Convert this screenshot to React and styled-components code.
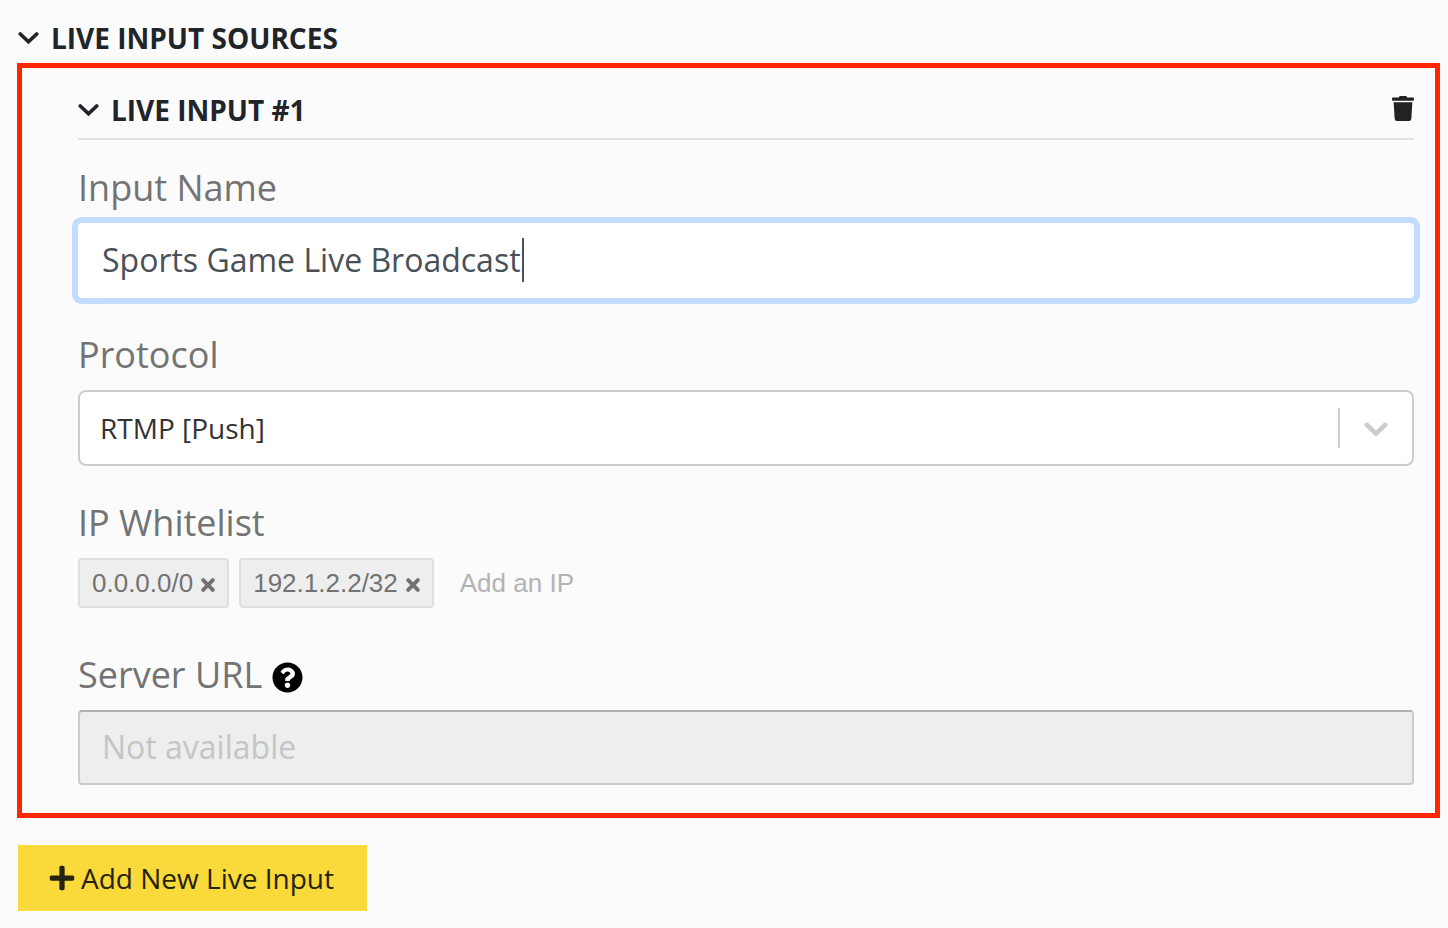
import React, { useState } from 'react';
import styled, { createGlobalStyle } from 'styled-components';
import { FaPlus, FaQuestionCircle, FaTrash } from 'react-icons/fa';

const GlobalStyle = createGlobalStyle`
  *, *::before, *::after { box-sizing: border-box; }
  body {
    margin: 0;
    background: #fbfbfb;
    color: #212529;
    font-family: "Open Sans", "Noto Sans", sans-serif;
  }
  button, input, select { font: inherit; color: inherit; margin: 0; }
`;

const Page = styled.main`
  padding: 18px 8px 16px 18px;
`;

const Toggle = styled.button`
  display: flex;
  align-items: center;
  gap: 12px;
  padding: 0;
  border: 0;
  background: none;
  cursor: pointer;
  svg { flex: none; }
`;

const SectionTitle = styled.h2`
  margin: 0;
  padding-bottom: 5px;
  font-size: 28px;
  line-height: 40px;
  font-weight: 700;
`;

const Panel = styled.section`
  margin-left: -1px;
  padding: 22px 21px 28px 56px;
  border: 5px solid #ff2600;
`;

const PanelHeader = styled.header`
  display: flex;
  align-items: center;
  justify-content: space-between;
  margin-bottom: 24px;
  padding-bottom: 8px;
  border-bottom: 2px solid #e1e1e1;
`;

const PanelTitle = styled.h3`
  margin: 0;
  font-size: 28px;
  line-height: 40px;
  font-weight: 700;
`;

const IconButton = styled.button`
  display: flex;
  padding: 0 0 4px;
  border: 0;
  background: none;
  color: #222;
  cursor: pointer;
  svg { width: 22px; height: 25px; }
`;

const Fields = styled.div`
  display: grid;
  gap: 33px;
`;

const Field = styled.div`
  display: grid;
  gap: 11px;
  min-width: 0;
`;

const LabelRow = styled.div`
  display: flex;
  align-items: center;
  gap: 10px;
`;

const Label = styled.label`
  color: #737373;
  font-size: 36px;
  line-height: 48px;
`;

const HelpButton = styled.button`
  display: flex;
  padding: 4px 0 0;
  border: 0;
  background: none;
  color: #000;
`;

const FocusedBox = styled.div`
  display: flex;
  padding: 15px 24px 16px;
  border-radius: 4px;
  background: #fff;
  box-shadow: 0 0 0 6px #c2dbfe;
  color: #495057;
`;

const NameInput = styled.input`
  field-sizing: content;
  max-width: 100%;
  padding: 0 1px 0 0;
  border: 0;
  outline: 0;
  background: none;
  font-size: 32px;
  line-height: 44px;
  caret-color: transparent;
`;

const Caret = styled.span`
  flex: none;
  width: 2px;
  height: 44px;
  background: #495057;
`;

const SelectBox = styled.div`
  display: flex;
  align-items: center;
  height: 76px;
  border: 2px solid #ccc;
  border-radius: 8px;
  background: #fff;
  color: #ccc;
`;

const Select = styled.select`
  flex: 1;
  min-width: 0;
  height: 100%;
  padding: 0 20px;
  border: 0;
  outline: 0;
  appearance: none;
  background: none;
  color: #333;
  font-size: 28px;
`;

const SelectArrow = styled.span`
  display: flex;
  padding: 0 16px;
  border-left: 2px solid #ccc;
`;

const Tags = styled.div`
  display: flex;
  align-items: center;
  gap: 10px;
  margin-bottom: 10px;
  font-family: "Liberation Sans", Arial, sans-serif;
  font-size: 26px;
`;

const Tag = styled.span`
  display: flex;
  align-items: center;
  gap: 7px;
  height: 50px;
  padding: 0 11px 0 12px;
  border: 2px solid #dfdfdf;
  border-radius: 4px;
  background: #eee;
  color: #737373;
`;

const TagRemove = styled.button`
  display: flex;
  padding: 4px 0 0;
  border: 0;
  background: none;
  cursor: pointer;
`;

const TagInput = styled.input`
  flex: 1;
  min-width: 0;
  padding: 0 16px;
  border: 0;
  outline: 0;
  background: none;
  &::placeholder { color: #b3b3b3; opacity: 1; }
`;

const DisabledInput = styled.input`
  width: 100%;
  height: 75px;
  padding: 0 22px 2px;
  border: 2px solid #ccc;
  border-top-color: #b0b0b0;
  border-radius: 4px;
  background: #eee;
  font-size: 32px;
  &::placeholder { color: #c5c5c5; opacity: 1; }
`;

const AddButton = styled.button`
  display: flex;
  align-items: center;
  gap: 5px;
  height: 66px;
  margin-top: 27px;
  padding: 0 33px 0 30px;
  border: 0;
  background: #f9da3a;
  color: #25230b;
  font-size: 28px;
  cursor: pointer;
`;

function ChevronIcon() {
  return (
    <svg width="21" height="16" viewBox="0 0 21 16" fill="none" aria-hidden="true">
      <path d="M2.3 4 10.5 11.8 18.7 4" stroke="currentColor" strokeWidth="3.7" strokeLinecap="round" />
    </svg>
  );
}

function RemoveIcon() {
  return (
    <svg width="16" height="16" viewBox="0 0 16 16" aria-hidden="true">
      <path d="M3.2 3.2 12.8 12.8M12.8 3.2 3.2 12.8" stroke="currentColor" strokeWidth="4" strokeLinecap="round" />
    </svg>
  );
}

function ArrowIcon() {
  return (
    <svg width="40" height="40" viewBox="0 0 20 20" fill="currentColor" aria-hidden="true">
      <path d="M4.516 7.548c0.436-0.446 1.043-0.481 1.576 0l3.908 3.747 3.908-3.747c0.533-0.481 1.141-0.446 1.574 0 0.436 0.445 0.408 1.197 0 1.615-0.406 0.418-4.695 4.502-4.695 4.502-0.217 0.223-0.502 0.335-0.787 0.335s-0.57-0.112-0.789-0.335c0 0-4.287-4.084-4.695-4.502s-0.436-1.17 0-1.615z" />
    </svg>
  );
}

export default function App() {
  const [name, setName] = useState('Sports Game Live Broadcast');
  const [ips, setIps] = useState(['0.0.0.0/0', '192.1.2.2/32']);

  return (
    <>
      <GlobalStyle />
      <Page>
        <SectionTitle>
          <Toggle type="button" aria-expanded="true">
            <ChevronIcon />
            LIVE INPUT SOURCES
          </Toggle>
        </SectionTitle>
        <Panel>
          <PanelHeader>
            <PanelTitle>
              <Toggle type="button" aria-expanded="true">
                <ChevronIcon />
                LIVE INPUT #1
              </Toggle>
            </PanelTitle>
            <IconButton type="button" aria-label="Delete input">
              <FaTrash />
            </IconButton>
          </PanelHeader>
          <Fields>
            <Field>
              <Label htmlFor="input-name">Input Name</Label>
              <FocusedBox>
                <NameInput id="input-name" value={name} onChange={(e) => setName(e.target.value)} />
                <Caret />
              </FocusedBox>
            </Field>
            <Field>
              <Label htmlFor="protocol">Protocol</Label>
              <SelectBox>
                <Select id="protocol" defaultValue="rtmp-push">
                  <option value="rtmp-push">RTMP [Push]</option>
                </Select>
                <SelectArrow><ArrowIcon /></SelectArrow>
              </SelectBox>
            </Field>
            <Field>
              <Label htmlFor="whitelist">IP Whitelist</Label>
              <Tags>
                {ips.map((ip) => (
                  <Tag key={ip}>
                    {ip}
                    <TagRemove
                      type="button"
                      aria-label={`Remove ${ip}`}
                      onClick={() => setIps(ips.filter((x) => x !== ip))}
                    >
                      <RemoveIcon />
                    </TagRemove>
                  </Tag>
                ))}
                <TagInput id="whitelist" placeholder="Add an IP" />
              </Tags>
            </Field>
            <Field>
              <LabelRow>
                <Label htmlFor="server-url">Server URL</Label>
                <HelpButton type="button" aria-label="Help"><FaQuestionCircle size={31} /></HelpButton>
              </LabelRow>
              <DisabledInput id="server-url" placeholder="Not available" disabled />
            </Field>
          </Fields>
        </Panel>
        <AddButton type="button">
          <FaPlus size={28} />
          Add New Live Input
        </AddButton>
      </Page>
    </>
  );
}
